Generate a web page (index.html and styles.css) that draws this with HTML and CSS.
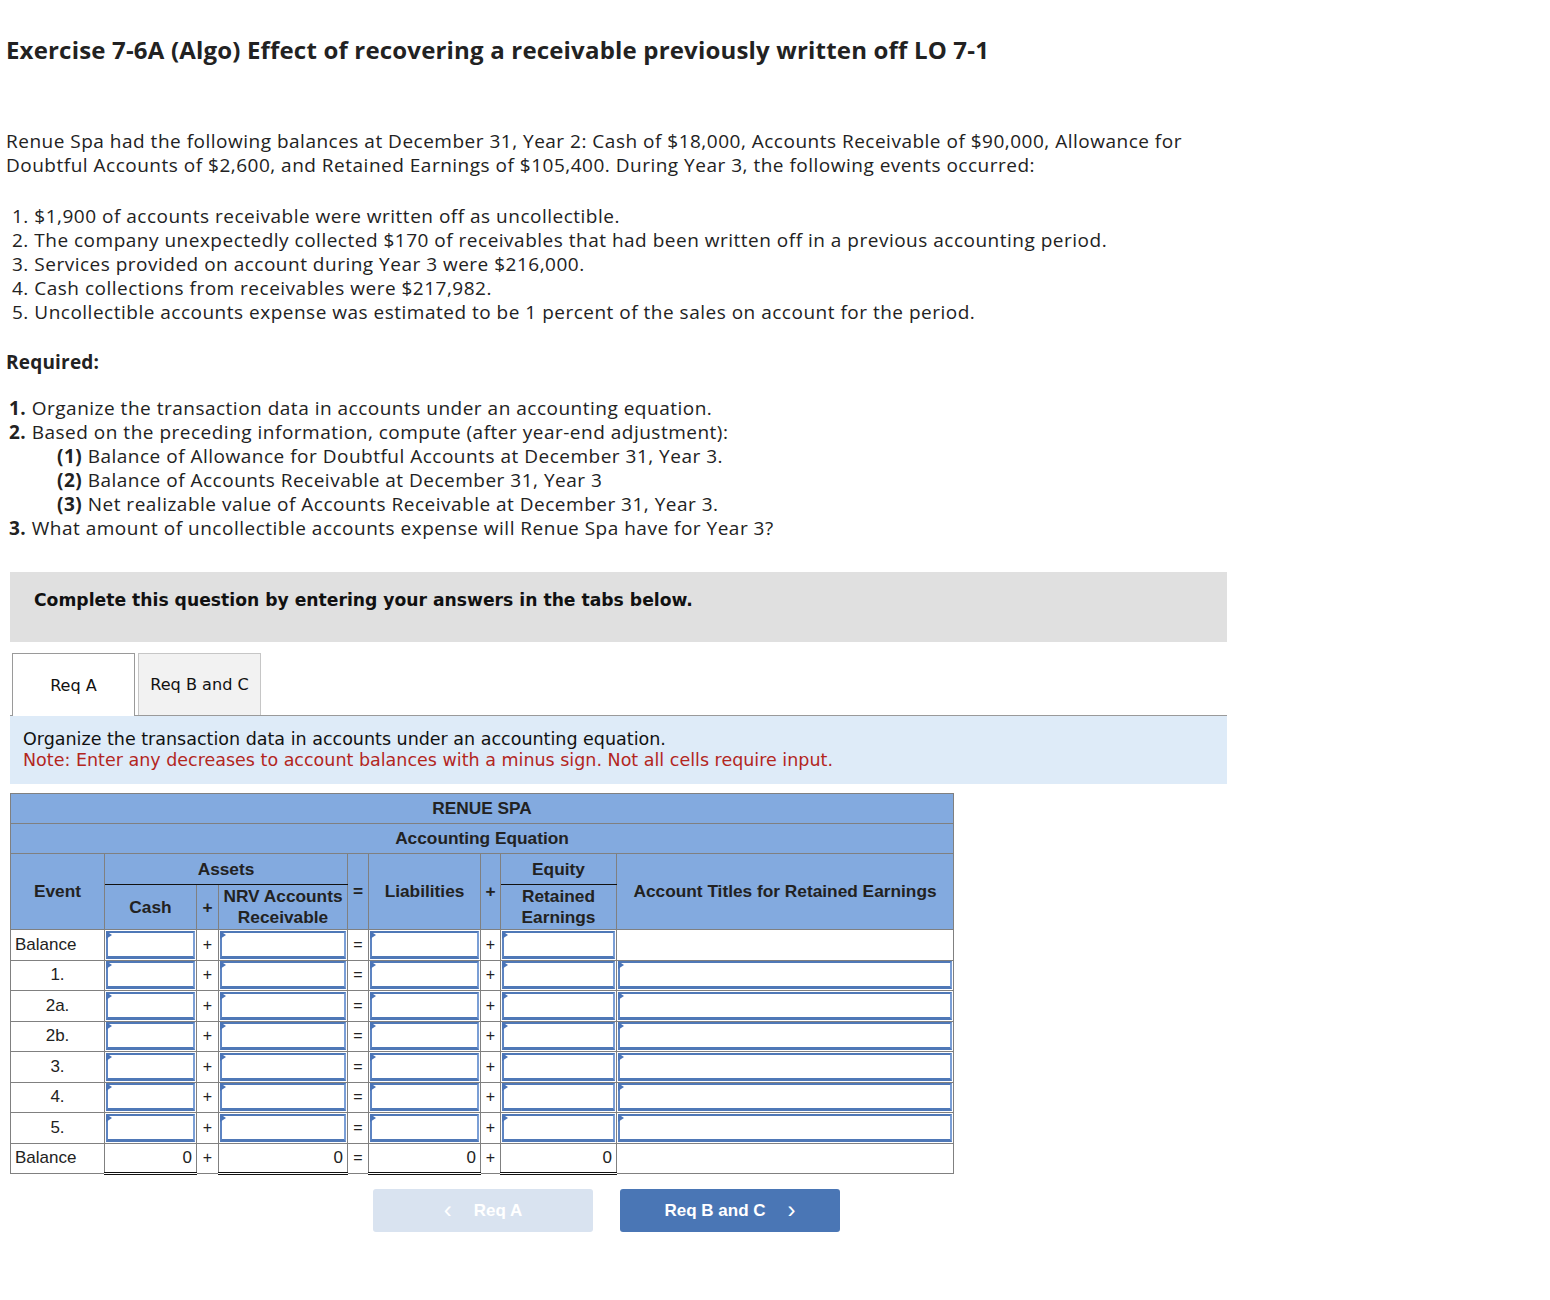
FILE: index.html
```html
<!DOCTYPE html>
<html>
<head>
<meta charset="utf-8">
<link rel="stylesheet" href="styles.css">
</head>
<body>
<div class="page">
  <h1 class="title">Exercise 7-6A (Algo) Effect of recovering a receivable previously written off LO 7-1</h1>
  <p class="intro">Renue Spa had the following balances at December 31, Year 2: Cash of $18,000, Accounts Receivable of $90,000, Allowance for Doubtful Accounts of $2,600, and Retained Earnings of $105,400. During Year 3, the following events occurred:</p>
  <ol class="events">
    <li>1. $1,900 of accounts receivable were written off as uncollectible.</li>
    <li>2. The company unexpectedly collected $170 of receivables that had been written off in a previous accounting period.</li>
    <li>3. Services provided on account during Year 3 were $216,000.</li>
    <li>4. Cash collections from receivables were $217,982.</li>
    <li>5. Uncollectible accounts expense was estimated to be 1 percent of the sales on account for the period.</li>
  </ol>
  <p class="required">Required:</p>
  <div class="reqs">
    <div class="req"><b>1.</b> Organize the transaction data in accounts under an accounting equation.</div>
    <div class="req"><b>2.</b> Based on the preceding information, compute (after year-end adjustment):</div>
    <div class="req sub"><b>(1)</b> Balance of Allowance for Doubtful Accounts at December 31, Year 3.</div>
    <div class="req sub"><b>(2)</b> Balance of Accounts Receivable at December 31, Year 3</div>
    <div class="req sub"><b>(3)</b> Net realizable value of Accounts Receivable at December 31, Year 3.</div>
    <div class="req"><b>3.</b> What amount of uncollectible accounts expense will Renue Spa have for Year 3?</div>
  </div>

  <div class="work">
    <div class="banner">Complete this question by entering your answers in the tabs below.</div>
    <div class="tabs">
      <div class="tab active">Req A</div>
      <div class="tab">Req B and C</div>
    </div>
    <div class="instructions">
      <div>Organize the transaction data in accounts under an accounting equation.</div>
      <div class="note">Note: Enter any decreases to account balances with a minus sign. Not all cells require input.</div>
    </div>

    <table class="eq">
      <colgroup>
        <col class="c-event"><col class="c-cash"><col class="c-op"><col class="c-nrv"><col class="c-op2"><col class="c-liab"><col class="c-op3"><col class="c-re"><col class="c-titles">
      </colgroup>
      <thead>
        <tr class="h-toprow"><th colspan="9">RENUE SPA</th></tr>
        <tr class="h-toprow"><th colspan="9">Accounting Equation</th></tr>
        <tr class="h-grouprow">
          <th rowspan="2">Event</th>
          <th colspan="3" class="h-group">Assets</th>
          <th rowspan="2" class="h-op">=</th>
          <th rowspan="2">Liabilities</th>
          <th rowspan="2" class="h-op">+</th>
          <th class="h-group">Equity</th>
          <th rowspan="2">Account Titles for Retained Earnings</th>
        </tr>
        <tr class="h-sub">
          <th>Cash</th>
          <th class="h-op">+</th>
          <th>NRV Accounts Receivable</th>
          <th>Retained Earnings</th>
        </tr>
      </thead>
      <tbody>
        <tr>
          <td class="ev left">Balance</td>
          <td class="in"><div class="box"></div></td><td class="op">+</td>
          <td class="in"><div class="box"></div></td><td class="op">=</td>
          <td class="in"><div class="box"></div></td><td class="op">+</td>
          <td class="in"><div class="box"></div></td>
          <td class="blank"></td>
        </tr>
        <tr>
          <td class="ev">1.</td>
          <td class="in"><div class="box"></div></td><td class="op">+</td>
          <td class="in"><div class="box"></div></td><td class="op">=</td>
          <td class="in"><div class="box"></div></td><td class="op">+</td>
          <td class="in"><div class="box"></div></td>
          <td class="in"><div class="box"></div></td>
        </tr>
        <tr>
          <td class="ev">2a.</td>
          <td class="in"><div class="box"></div></td><td class="op">+</td>
          <td class="in"><div class="box"></div></td><td class="op">=</td>
          <td class="in"><div class="box"></div></td><td class="op">+</td>
          <td class="in"><div class="box"></div></td>
          <td class="in"><div class="box"></div></td>
        </tr>
        <tr>
          <td class="ev">2b.</td>
          <td class="in"><div class="box"></div></td><td class="op">+</td>
          <td class="in"><div class="box"></div></td><td class="op">=</td>
          <td class="in"><div class="box"></div></td><td class="op">+</td>
          <td class="in"><div class="box"></div></td>
          <td class="in"><div class="box"></div></td>
        </tr>
        <tr>
          <td class="ev">3.</td>
          <td class="in"><div class="box"></div></td><td class="op">+</td>
          <td class="in"><div class="box"></div></td><td class="op">=</td>
          <td class="in"><div class="box"></div></td><td class="op">+</td>
          <td class="in"><div class="box"></div></td>
          <td class="in"><div class="box"></div></td>
        </tr>
        <tr>
          <td class="ev">4.</td>
          <td class="in"><div class="box"></div></td><td class="op">+</td>
          <td class="in"><div class="box"></div></td><td class="op">=</td>
          <td class="in"><div class="box"></div></td><td class="op">+</td>
          <td class="in"><div class="box"></div></td>
          <td class="in"><div class="box"></div></td>
        </tr>
        <tr>
          <td class="ev">5.</td>
          <td class="in"><div class="box"></div></td><td class="op">+</td>
          <td class="in"><div class="box"></div></td><td class="op">=</td>
          <td class="in"><div class="box"></div></td><td class="op">+</td>
          <td class="in"><div class="box"></div></td>
          <td class="in"><div class="box"></div></td>
        </tr>
        <tr class="total">
          <td class="ev left">Balance</td>
          <td class="sum">0</td><td class="op">+</td>
          <td class="sum">0</td><td class="op">=</td>
          <td class="sum">0</td><td class="op">+</td>
          <td class="sum">0</td>
          <td class="blank"></td>
        </tr>
      </tbody>
    </table>

    <div class="nav">
      <div class="btn disabled"><span class="chev">&lsaquo;</span>Req A</div>
      <div class="btn primary">Req B and C<span class="chev">&rsaquo;</span></div>
    </div>
  </div>
</div>
</body>
</html>
```

FILE: styles.css
```css
html, body {
  margin: 0;
  padding: 0;
  background: #fff;
}
body {
  font-family: "Open Sans", Lato, sans-serif;
  color: #222;
}
.page {
  padding: 0 0 0 6px;
  width: 1221px;
}
.title {
  margin: 0;
  padding-top: 35px;
  font-size: 24px;
  letter-spacing: 0.18px;
  line-height: 30px;
  font-weight: 700;
  color: #222;
}
.intro,
.events,
.required,
.reqs {
  font-size: 19px;
  letter-spacing: 0.5px;
  line-height: 24px;
}
.intro {
  margin: 64px 0 0 0;
}
.events {
  list-style: none;
  margin: 27px 0 0 0;
  padding: 0 0 0 6px;
}
.required {
  margin: 26px 0 0 0;
  font-weight: 700;
  letter-spacing: 0.2px;
}
.reqs {
  margin-top: 22px;
  padding-left: 3px;
}
.req.sub {
  padding-left: 48px;
}
.work {
  margin: 32px 0 0 4px;
  width: 1217px;
}
.banner {
  background: #e0e0e0;
  height: 70px;
  box-sizing: border-box;
  padding: 18px 0 0 24px;
  font-family: "DejaVu Sans", Verdana, sans-serif;
  font-weight: 700;
  font-size: 17.2px;
  color: #111;
}
.tabs {
  display: flex;
  gap: 3px;
  margin-top: 11px;
  padding-left: 2px;
  border-bottom: 1px solid #9a9a9a;
  height: 62px;
}
.tab {
  width: 123px;
  box-sizing: border-box;
  height: 62px;
  display: flex;
  align-items: center;
  justify-content: center;
  font-family: "DejaVu Sans", Verdana, sans-serif;
  font-size: 16.1px;
  color: #111;
  background: #f2f2f2;
  border: 1px solid #c6c6c6;
  border-bottom: none;
}
.tab.active {
  background: #fff;
  border-color: #9a9a9a;
  height: 63px;
  margin-bottom: -1px;
}
.instructions {
  background: #deebf8;
  height: 68px;
  box-sizing: border-box;
  padding: 13px 0 0 13px;
  font-family: "DejaVu Sans", Verdana, sans-serif;
  font-size: 17.5px;
  line-height: 21px;
  color: #111;
}
.note {
  color: #b3261e;
}
.eq {
  margin-top: 9px;
  border-collapse: collapse;
  width: 943px;
  font-family: "Liberation Sans", Arial, sans-serif;
  font-size: 17px;
  color: #222;
  table-layout: fixed;
}
.c-event { width: 94px; }
.c-cash { width: 92px; }
.c-op { width: 22px; }
.c-nrv { width: 129px; }
.c-op2 { width: 21px; }
.c-liab { width: 112px; }
.c-op3 { width: 20px; }
.c-re { width: 116px; }
.c-titles { width: 337px; }
.eq th {
  background: #83aadf;
  border: 1px solid #808080;
  font-weight: 700;
  font-size: 17.3px;
  text-align: center;
  padding: 0 1px;
  line-height: 21px;
  color: #222;
}
.h-toprow {
  height: 30px;
}
.h-grouprow {
  height: 31px;
}
.eq th.h-group {
  border-bottom: 1px solid #111;
}
.h-sub {
  height: 45px;
}
.eq .h-sub th {
  border-top: 1px solid #111;
}
.eq th.h-op {
  padding: 0;
}
.eq tbody tr {
  height: 30.5px;
}
.eq td {
  border: 1px solid #808080;
  padding: 0;
  background: #fff;
}
.eq td.ev {
  text-align: center;
}
.eq td.ev.left {
  text-align: left;
  padding-left: 4px;
}
.eq td.op {
  text-align: center;
  font-size: 16px;
}
.eq td.in {
  padding: 0 1px;
  vertical-align: middle;
}
.box {
  position: relative;
  height: 23px;
  background: #fff;
  border: 2px solid #7b9fd6;
  border-bottom: 3px solid #4f78b7;
  border-top-color: #4f78b7;
  border-left-color: #5d84c2;
}
.box::before {
  content: "";
  position: absolute;
  left: -2px;
  top: -2px;
  width: 0;
  height: 0;
  border-top: 4px solid transparent;
  border-bottom: 4px solid transparent;
  border-left: 6px solid #4a74b8;
}
.eq td.sum {
  text-align: right;
  padding-right: 4px;
  border-bottom: 3px double #111;
}
.nav {
  display: flex;
  gap: 27px;
  margin: 14px 0 0 363px;
}
.btn {
  width: 220px;
  height: 43px;
  border-radius: 3px;
  display: flex;
  align-items: center;
  justify-content: center;
  font-family: "Liberation Sans", Arial, sans-serif;
  font-weight: 700;
  font-size: 17px;
  color: #fff;
}
.btn.disabled {
  background: #d9e3f0;
}
.btn.primary {
  background: #4a76b5;
}
.chev {
  font-weight: 400;
  font-size: 24px;
  line-height: 20px;
  position: relative;
  top: -1px;
}
.btn.primary .chev {
  margin-left: 22px;
}
.btn.disabled .chev {
  margin-right: 22px;
}
```
